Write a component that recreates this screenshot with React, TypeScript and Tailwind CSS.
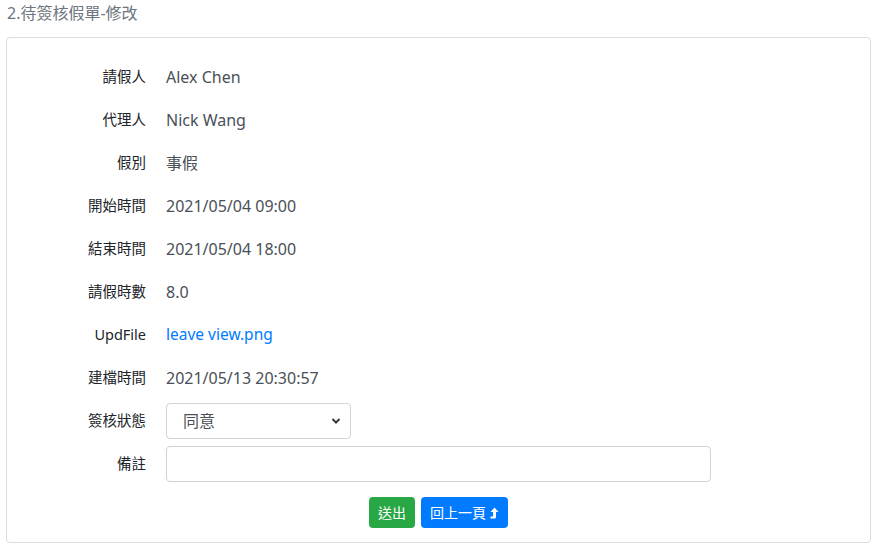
import React, { useState } from 'react';

const rows: { label: string; value: string; link?: boolean }[] = [
  { label: '請假人', value: 'Alex Chen' },
  { label: '代理人', value: 'Nick Wang' },
  { label: '假別', value: '事假' },
  { label: '開始時間', value: '2021/05/04 09:00' },
  { label: '結束時間', value: '2021/05/04 18:00' },
  { label: '請假時數', value: '8.0' },
  { label: 'UpdFile', value: 'leave view.png', link: true },
  { label: '建檔時間', value: '2021/05/13 20:30:57' },
];

function LevelUp() {
  return (
    <svg width="9" height="12" viewBox="0 0 9 12" className="ml-1">
      <path d="M4.5 0.5 L8.5 5 L6 5 L6 10 Q6 11.5 4.5 11.5 L0.5 11.5 L0.5 9.5 L3 9.5 L3 5 L0.5 5 Z" fill="white" />
    </svg>
  );
}

export default function App() {
  const [status, setStatus] = useState('同意');
  const [note, setNote] = useState('');

  return (
    <div
      className="bg-white w-[876px] h-[547px] px-[6px] pt-[2px]"
      style={{ fontFamily: '"Noto Sans", "Noto Sans CJK TC", sans-serif' }}
    >
      <div className="text-[16px] text-[#6c757d] h-[35px] leading-[22px] pl-[1px]">2.待簽核假單-修改</div>
      <div className="border border-[#dcdcdc] rounded-[4px] w-[865px] pt-[17px] pb-[14px]">
        <div className="grid grid-cols-[139px_1fr] gap-x-5">
          {rows.map((r) => (
            <React.Fragment key={r.label}>
              <div className="h-[43px] flex items-center justify-end text-[14.5px] text-[#212529]">{r.label}</div>
              <div className="h-[43px] flex items-center text-[16px]">
                {r.link ? (
                  <a href="#" className="text-[#007bff] text-[15.5px]">{r.value}</a>
                ) : (
                  <span className="text-[#495057]">{r.value}</span>
                )}
              </div>
            </React.Fragment>
          ))}
          <div className="h-[43px] flex items-center justify-end text-[14.5px] text-[#212529]">簽核狀態</div>
          <div className="h-[43px] flex items-center">
            <div className="relative w-[185px] h-[36px]">
              <select
                value={status}
                onChange={(e) => setStatus(e.target.value)}
                className="appearance-none w-full h-full border border-[#ced4da] rounded-[4px] pl-4 pr-8 text-[16px] text-[#495057] bg-white"
              >
                <option>同意</option>
                <option>不同意</option>
              </select>
              <svg width="10" height="8" viewBox="0 0 10 8" className="absolute right-[10px] top-[14px] pointer-events-none">
                <path d="M1.5 2 L5 5.5 L8.5 2" stroke="#343a40" strokeWidth="2" fill="none" />
              </svg>
            </div>
          </div>
          <div className="h-[43px] flex items-center justify-end text-[14.5px] text-[#212529]">備註</div>
          <div className="h-[43px] flex items-center">
            <input
              value={note}
              onChange={(e) => setNote(e.target.value)}
              className="w-[545px] h-[36px] border border-[#ced4da] rounded-[4px] px-3 text-[16px] text-[#495057]"
            />
          </div>
        </div>
        <div className="flex justify-center gap-[6px] mt-3">
          <button className="h-[31px] px-[9px] bg-[#28a745] text-white text-[14px] rounded-[4px]">送出</button>
          <button className="h-[31px] px-[9px] bg-[#007bff] text-white text-[14px] rounded-[4px] flex items-center">
            回上一頁
            <LevelUp />
          </button>
        </div>
      </div>
    </div>
  );
}
